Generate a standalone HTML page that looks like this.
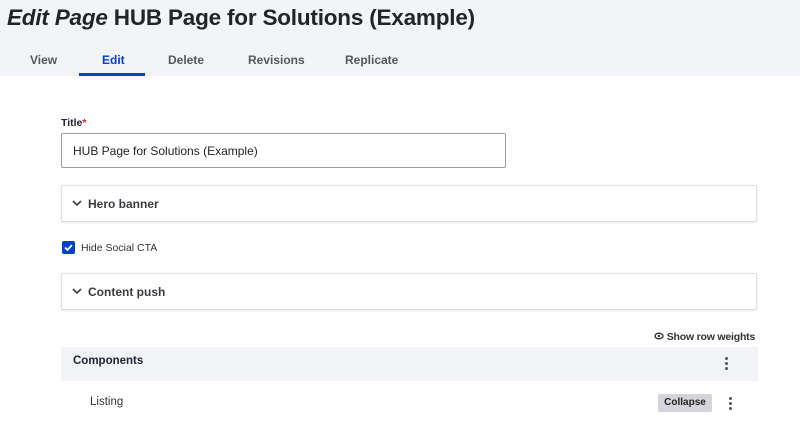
<!DOCTYPE html>
<html><head><style>
body{margin:0;width:800px;height:424px;overflow:hidden;background:#fff;font-family:"Liberation Sans",Arial,sans-serif;color:#222330;position:relative}
.hdr{position:absolute;left:0;top:0;width:800px;height:76px;background:#f3f4f7}
h1{position:absolute;left:7px;top:5px;margin:0;font-size:22.5px;font-weight:bold;color:#232429;white-space:nowrap;letter-spacing:-0.2px}
h1 i{font-style:italic}
.tab{position:absolute;top:53px;font-size:12px;font-weight:bold;color:#55565b}
.ul{position:absolute;left:79px;top:73px;width:66px;height:3px;background:#003ecc}
.a{position:absolute;white-space:nowrap}
.box{position:absolute;left:61px;width:694px;height:35px;border:1px solid #dedfe4;border-radius:2px;box-shadow:0 1px 2px rgba(0,0,0,.08)}
.box span{position:absolute;left:26px;top:11px;font-size:12px;font-weight:bold;color:#3b3c40}
.box svg{position:absolute;left:10px;top:14px}
</style></head><body>
<div class="hdr"></div>
<h1><i>Edit Page</i> HUB Page for Solutions (Example)</h1>
<div class="tab" style="left:30px">View</div>
<div class="tab" style="left:102px;color:#003ecc">Edit</div>
<div class="tab" style="left:168px">Delete</div>
<div class="tab" style="left:248px">Revisions</div>
<div class="tab" style="left:345px">Replicate</div>
<div class="ul"></div>
<div class="a" style="left:61px;top:117px;font-size:10.5px;font-weight:bold">Title<span style="color:#d72222">*</span></div>
<div class="a" style="left:61px;top:133px;width:443px;height:33px;border:1px solid #9b9ca4;border-radius:2px"></div>
<div class="a" style="left:73px;top:144px;font-size:12px;color:#222">HUB Page for Solutions (Example)</div>
<div class="box" style="top:185px"><svg width="10" height="7" viewBox="0 0 10 7"><path d="M1 1l4 4 4-4" fill="none" stroke="#3b3c40" stroke-width="1.6"/></svg><span>Hero banner</span></div>
<div class="a" style="left:62px;top:241px;width:13px;height:13px;background:#003ecc;border-radius:2px"><svg width="13" height="13" viewBox="0 0 13 13"><path d="M3 6.5l2.5 2.5L10 4" fill="none" stroke="#fff" stroke-width="1.8"/></svg></div>
<div class="a" style="left:81px;top:242px;font-size:10.5px;color:#333">Hide Social CTA</div>
<div class="box" style="top:273px"><svg width="10" height="7" viewBox="0 0 10 7"><path d="M1 1l4 4 4-4" fill="none" stroke="#3b3c40" stroke-width="1.6"/></svg><span>Content push</span></div>
<div class="a" style="left:654px;top:331px;font-size:10.5px;font-weight:bold;color:#333;letter-spacing:-0.2px"><svg width="10" height="8" viewBox="0 0 10 8"><ellipse cx="5" cy="4" rx="4" ry="2.8" fill="none" stroke="#333" stroke-width="1.4"/><circle cx="5" cy="4" r="1.2" fill="#333"/></svg> Show row weights</div>
<div class="a" style="left:61px;top:347px;width:697px;height:34px;background:#f2f3f6"></div>
<div class="a" style="left:73px;top:355px;font-size:11.5px;font-weight:bold">Components</div>
<div class="a" style="left:725px;top:357px;width:3px"><div style="width:3px;height:3px;border-radius:50%;background:#555;margin-bottom:2px"></div><div style="width:3px;height:3px;border-radius:50%;background:#555;margin-bottom:2px"></div><div style="width:3px;height:3px;border-radius:50%;background:#555"></div></div>
<div class="a" style="left:90px;top:396px;font-size:11.5px;color:#333">Listing</div>
<div class="a" style="left:658px;top:394px;width:54px;height:18px;background:#d4d5da;border-radius:2px;font-size:10px;font-weight:bold;text-align:center;line-height:18px;color:#222">Collapse</div>
<div class="a" style="left:729px;top:397px;width:3px"><div style="width:3px;height:3px;border-radius:50%;background:#555;margin-bottom:2px"></div><div style="width:3px;height:3px;border-radius:50%;background:#555;margin-bottom:2px"></div><div style="width:3px;height:3px;border-radius:50%;background:#555"></div></div>
</body></html>
